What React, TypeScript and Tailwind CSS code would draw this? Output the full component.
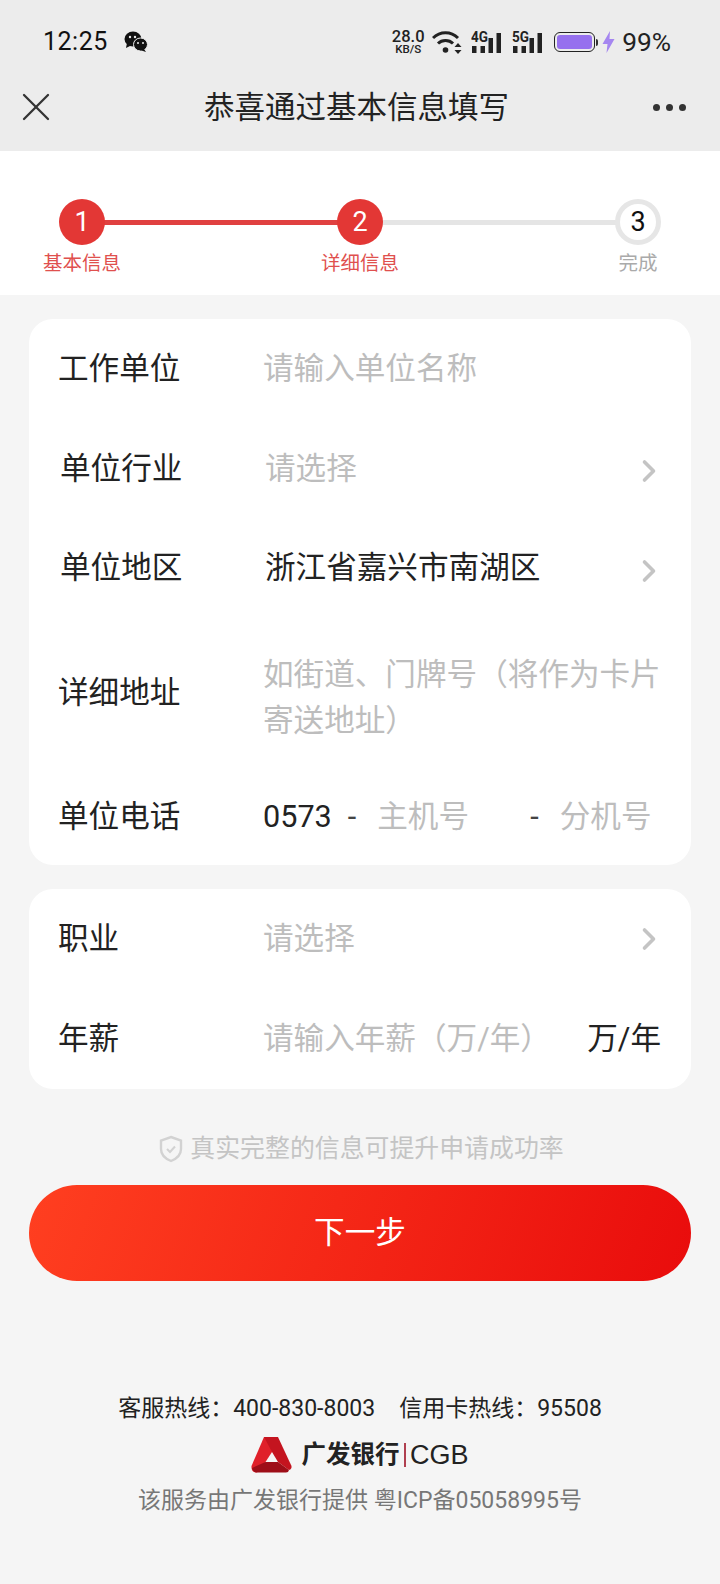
import { ChevronRight, X } from "lucide-react";

const FONT = "font-['Roboto','Noto_Sans_CJK_SC',sans-serif]";

function StatusBar() {
  return (
    <div className="flex h-[74px] items-end justify-between pb-[17px] pl-[43px] pr-[49px]">
      <div className="flex items-center gap-[16px]">
        <span className="text-[25px] leading-[30px] tracking-[0.5px] text-[#111]">12:25</span>
        <svg width="24" height="22" viewBox="0 0 24 22" aria-hidden>
          <ellipse cx="9" cy="8" rx="8.5" ry="7.5" fill="#111" />
          <path d="M3 12 L2 17 L8 14Z" fill="#111" />
          <ellipse cx="16.5" cy="13.5" rx="7" ry="6.5" fill="#111" stroke="#ececec" strokeWidth="1" />
          <path d="M20 18 L22 21 L16 19Z" fill="#111" />
          <circle cx="6" cy="6" r="1.2" fill="#ececec" />
          <circle cx="11" cy="6" r="1.2" fill="#ececec" />
          <circle cx="14" cy="12" r="1" fill="#ececec" />
          <circle cx="19" cy="12" r="1" fill="#ececec" />
        </svg>
      </div>
      <div className="flex items-center">
        <div className="flex w-[34px] flex-col items-center text-[#222]">
          <span className="text-[16.5px] font-medium leading-[14px]">28.0</span>
          <span className="text-[11.5px] font-medium leading-[11px]">KB/S</span>
        </div>
        <svg className="ml-[7px]" width="30" height="24" viewBox="0 0 30 24" fill="none" stroke="#222" aria-hidden>
          <path d="M1 8 C8 1 19 1 26 8" strokeWidth="3" />
          <path d="M6 13.5 C10 9.5 17 9.5 21 13.5" strokeWidth="3" />
          <circle cx="13.5" cy="20" r="2.8" fill="#222" stroke="none" />
          <path d="M26 13 L29.5 17 H22.5Z M26 24 L22.5 20 H29.5Z" fill="#222" stroke="none" />
        </svg>
        <Signal label="4G" className="ml-[9px]" />
        <Signal label="5G" className="ml-[11px]" />
        <div className="ml-[12px] flex items-center">
          <div className="h-[20px] w-[41px] rounded-[6px] border-[1.5px] border-[#222] p-[2px]">
            <div className="h-full w-full rounded-[3px] bg-[#9670ee]" />
          </div>
          <div className="ml-[1px] h-[7px] w-[2px] rounded-r-sm bg-[#333]" />
        </div>
        <svg className="ml-[4px]" width="13" height="22" viewBox="0 0 13 22" aria-hidden>
          <path d="M8 0 L0.5 13 H5.5 L4.5 22 L12.5 8 H7.5Z" fill="#a586f0" />
        </svg>
        <span className="ml-[7px] text-[26.3px] leading-[30px] text-[#222]">99%</span>
      </div>
    </div>
  );
}

function Signal({ label, className }: { label: string; className: string }) {
  return (
    <svg className={`${className} mt-[-6px]`} width="30" height="29" viewBox="0 -6 30 29" aria-hidden>
      <text x="0" y="11" fontSize="14" fontWeight="700" fill="#222" fontFamily="Roboto" textLength="17" lengthAdjust="spacingAndGlyphs">
        {label}
      </text>
      <rect x="1" y="15" width="4.5" height="7" fill="#222" />
      <rect x="9.5" y="15" width="4.5" height="7" fill="#222" />
      <rect x="17.5" y="7" width="4.5" height="15" fill="#222" />
      <rect x="25.5" y="2" width="4.5" height="20" fill="#222" />
    </svg>
  );
}

function NavBar() {
  return (
    <div className="flex h-[76px] items-start justify-between pl-[12px] pr-[34px] pt-[9px]">
      <X className="h-[48px] w-[48px] text-[#333]" strokeWidth={1.15} />
      <span className="mt-[6px] text-[30.5px] leading-[38px] text-[#222]">恭喜通过基本信息填写</span>
      <div className="mt-[21px] flex gap-[6px]">
        <span className="h-[7px] w-[7px] rounded-full bg-[#333]" />
        <span className="h-[7px] w-[7px] rounded-full bg-[#333]" />
        <span className="h-[7px] w-[7px] rounded-full bg-[#333]" />
      </div>
    </div>
  );
}

function Step({ n, label, state }: { n: number; label: string; state: "done" | "todo" }) {
  const done = state === "done";
  return (
    <div className="flex w-[80px] flex-col items-center">
      <div
        className={`z-10 flex h-[46px] w-[46px] items-center justify-center rounded-full text-[27px] ${
          done ? "bg-[#e33735] text-white" : "border-[5px] border-[#e6e6e6] bg-white text-[#111]"
        }`}
      >
        {n}
      </div>
      <span className={`mt-[5px] text-[19.5px] leading-[28px] ${done ? "text-[#e0504e]" : "text-[#aaa]"}`}>
        {label}
      </span>
    </div>
  );
}

function Stepper() {
  return (
    <div className="bg-white px-[42px] pb-[17px] pt-[48px]">
      <div className="relative flex justify-between">
        <div className="absolute left-[40px] top-[21px] h-[5px] w-[278px] bg-[#e04040]" />
        <div className="absolute left-[318px] top-[21px] h-[5px] w-[278px] bg-[#e5e5e5]" />
        <Step n={1} label="基本信息" state="done" />
        <Step n={2} label="详细信息" state="done" />
        <Step n={3} label="完成" state="todo" />
      </div>
    </div>
  );
}

function Row({
  label,
  h,
  inset = false,
  chevron = false,
  children,
}: {
  label: string;
  h: string;
  inset?: boolean;
  chevron?: boolean;
  children: React.ReactNode;
}) {
  return (
    <div className={`flex items-center pr-[30px] text-[30.6px] ${h} ${inset ? "pl-[31px]" : "pl-[29px]"}`}>
      <span className="w-[205px] shrink-0 leading-[40px] text-[#222]">{label}</span>
      <div className="min-w-0 flex-1">{children}</div>
      {chevron && (
        <ChevronRight
          className={`-mr-[6px] h-[36px] w-[36px] shrink-0 text-[#c4c4c4] ${inset ? "mt-[5px]" : ""}`}
          strokeWidth={2.4}
        />
      )}
    </div>
  );
}

function Placeholder({ children }: { children: React.ReactNode }) {
  return <span className="text-[#bdbdbd]">{children}</span>;
}

function Logo() {
  return (
    <div className="mt-[9px] flex h-[38px] items-center justify-center">
      <svg width="41" height="36" viewBox="0 0 41 36" aria-hidden>
        <path d="M13 0 H20 L21 15 L14.5 25 L6 35.5 Q0 35.5 0.5 29 Z" fill="#e0202a" />
        <path d="M13 0 H27 L40.5 29 Q41 32 38 33 L27 25 L21 15 Z" fill="#c4141f" />
        <path d="M14.5 25 H27 L38 33 Q37.5 35.5 35 35.5 H6 Q2 35.5 1 31Z" fill="#9e0e18" />
      </svg>
      <span className="ml-[9px] text-[24.5px] font-bold leading-[38px] text-[#222]">广发银行</span>
      <span className="ml-[5px] h-[24px] w-[1.5px] bg-[#b04050]" />
      <span className="ml-[4px] font-['Liberation_Sans',sans-serif] text-[27px] leading-[38px] text-[#222]">CGB</span>
    </div>
  );
}

export default function App() {
  return (
    <div className={`min-h-[1584px] w-[720px] bg-[#f5f5f5] ${FONT}`}>
      <div className="h-[151px] bg-[#ececec]">
        <StatusBar />
        <NavBar />
      </div>
      <Stepper />

      <div className="px-[29px] pt-[24px]">
        <div className="rounded-[24px] bg-white">
          <Row label="工作单位" h="h-[100px]">
            <Placeholder>请输入单位名称</Placeholder>
          </Row>
          <Row label="单位行业" h="h-[99px]" inset chevron>
            <Placeholder>请选择</Placeholder>
          </Row>
          <Row label="单位地区" h="h-[100px]" inset chevron>
            <span className="text-[#222]">浙江省嘉兴市南湖区</span>
          </Row>
          <Row label="详细地址" h="h-[150px]">
            <div className="-mr-[6px] pt-[9px] leading-[46px] text-[#bdbdbd]">如街道、门牌号（将作为卡片寄送地址）</div>
          </Row>
          <Row label="单位电话" h="h-[97px]">
            <div className="flex items-center whitespace-nowrap">
              <span className="text-[#222]">0573</span>
              <span className="ml-[16px] text-[#444]">-</span>
              <span className="ml-[21px] w-[153px]">
                <Placeholder>主机号</Placeholder>
              </span>
              <span className="text-[#444]">-</span>
              <span className="ml-[21px]">
                <Placeholder>分机号</Placeholder>
              </span>
            </div>
          </Row>
        </div>

        <div className="mt-[24px] rounded-[24px] bg-white">
          <Row label="职业" h="h-[100px]" chevron>
            <Placeholder>请选择</Placeholder>
          </Row>
          <Row label="年薪" h="h-[100px]">
            <div className="flex items-center justify-between whitespace-nowrap">
              <Placeholder>请输入年薪（万/年）</Placeholder>
              <span className="text-[#222]">万/年</span>
            </div>
          </Row>
        </div>

        <div className="mt-[43px] flex h-[34px] items-center justify-center pl-[3px] text-[24.9px] leading-[34px] text-[#c4c4c4]">
          <svg className="mr-[7px]" width="24" height="28" viewBox="0 0 24 28" fill="none" stroke="#d2d2d2" strokeWidth="2.4" aria-hidden>
            <path d="M12 2 L22 5.5 V14 C22 20 17 24 12 26 C7 24 2 20 2 14 V5.5 Z" />
            <path d="M8 14 L11 17 L16 11.5" strokeWidth="2" />
          </svg>
          真实完整的信息可提升申请成功率
        </div>

        <button className="mt-[19px] block h-[96px] w-full rounded-full bg-[linear-gradient(110deg,#ff3f20,#e90c0c)] text-[30.6px] text-white">
          下一步
        </button>

        <div className="mt-[110px] flex h-[36px] items-center justify-center text-[23px] text-[#222]">
          <span>客服热线：400-830-8003</span>
          <span className="ml-[24px]">信用卡热线：95508</span>
        </div>
        <Logo />
        <div className="mt-[9px] text-center text-[23px] leading-[36px] text-[#777]">
          该服务由广发银行提供 粤ICP备05058995号
        </div>
      </div>
    </div>
  );
}
